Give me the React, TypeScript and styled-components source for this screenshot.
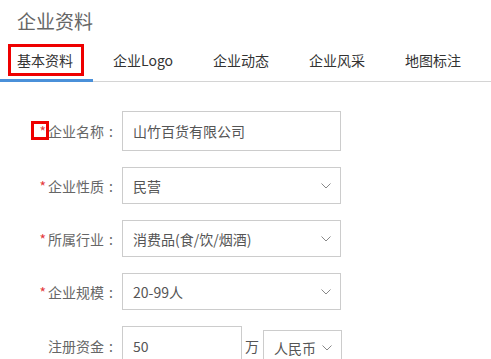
import React from "react";
import styled, { createGlobalStyle } from "styled-components";

const GlobalStyle = createGlobalStyle`
  body {
    margin: 0;
    background: #fff;
    font-family: "Microsoft YaHei", "Noto Sans CJK SC", "Liberation Sans", sans-serif;
  }
`;

const tabs = ["基本资料", "企业Logo", "企业动态", "企业风采", "地图标注"];

const Chevron = () => (
  <svg width="10" height="6" viewBox="0 0 10 6" fill="none">
    <path d="M0.5 0.5 L5 5 L9.5 0.5" stroke="#888" strokeWidth="1" />
  </svg>
);

const FieldLabel = ({ text, required, marked }: { text: string; required?: boolean; marked?: boolean }) => (
  <Label>
    {required && (
      <Star>
        *{marked && <StarMark />}
      </Star>
    )}
    {text}
    <Colon>:</Colon>
  </Label>
);

const App = () => {
  return (
    <Page>
      <GlobalStyle />
      <Title>企业资料</Title>
      <Tabs>
        {tabs.map((t, i) => (
          <Tab key={t} active={i === 0}>
            {t}
            {i === 0 && <Mark />}
          </Tab>
        ))}
      </Tabs>
      <Form>
        <Row>
          <FieldLabel text="企业名称" required marked />
          <Input h={40} w={219}>山竹百货有限公司</Input>
        </Row>
        <Row>
          <FieldLabel text="企业性质" required />
          <Select h={37} w={219}>
            民营
            <Chevron />
          </Select>
        </Row>
        <Row>
          <FieldLabel text="所属行业" required />
          <Select h={37} w={219}>
            消费品(食/饮/烟酒)
            <Chevron />
          </Select>
        </Row>
        <Row>
          <FieldLabel text="企业规模" required />
          <Select h={37} w={219}>
            20-99人
            <Chevron />
          </Select>
        </Row>
        <Row>
          <FieldLabel text="注册资金" />
          <Input h={40} w={120}>50</Input>
          <Unit>万</Unit>
          <Select h={36} w={79} small>
            人民币
            <Chevron />
          </Select>
        </Row>
      </Form>
    </Page>
  );
};

export default App;

const Page = styled.div`
  width: 491px;
  height: 359px;
  overflow: hidden;
`;

const Title = styled.div`
  padding: 9px 0 0 17px;
  height: 44px;
  box-sizing: border-box;
  font-size: 19px;
  line-height: 24px;
  color: #666;
`;

const Tabs = styled.div`
  display: flex;
  border-bottom: 1px solid #d4d4d4;
`;

const Tab = styled.div<{ active?: boolean }>`
  position: relative;
  height: 35px;
  line-height: 33px;
  padding: 0 20px;
  font-size: 14px;
  color: #333;
  margin-bottom: -1px;
  border-bottom: 3px solid ${(p) => (p.active ? "#4a90d9" : "transparent")};

  &:first-child {
    padding-left: 17px;
  }
`;

const Mark = styled.span`
  position: absolute;
  left: 8px;
  top: 0;
  width: 70px;
  height: 26px;
  border: 3px solid #e00;
`;

const Form = styled.div`
  padding-top: 29px;
  display: flex;
  flex-direction: column;
  gap: 16px;
`;

const Row = styled.div`
  display: flex;
  align-items: center;
`;

const Label = styled.div`
  width: 118px;
  text-align: right;
  font-size: 14px;
  color: #666;
  margin-right: 4px;
  white-space: nowrap;
`;

const Colon = styled.span`
  display: inline-block;
  width: 14px;
  text-align: center;
`;

const Star = styled.span`
  position: relative;
  color: #e4393c;
  margin-right: 2px;
`;

const StarMark = styled.span`
  position: absolute;
  left: -8px;
  top: 0;
  width: 12px;
  height: 13px;
  border: 3px solid #e00;
`;

const Input = styled.div<{ h: number; w: number }>`
  width: ${(p) => p.w}px;
  height: ${(p) => p.h}px;
  box-sizing: border-box;
  border: 1px solid #ccc;
  padding-left: 10px;
  display: flex;
  align-items: center;
  font-size: 14px;
  color: #555;
`;

const Select = styled(Input)<{ small?: boolean }>`
  justify-content: space-between;
  padding-right: 9px;
  margin-top: ${(p) => (p.small ? "4px" : "0")};
`;

const Unit = styled.span`
  font-size: 14px;
  color: #555;
  margin: 0 4px 0 3px;
`;
